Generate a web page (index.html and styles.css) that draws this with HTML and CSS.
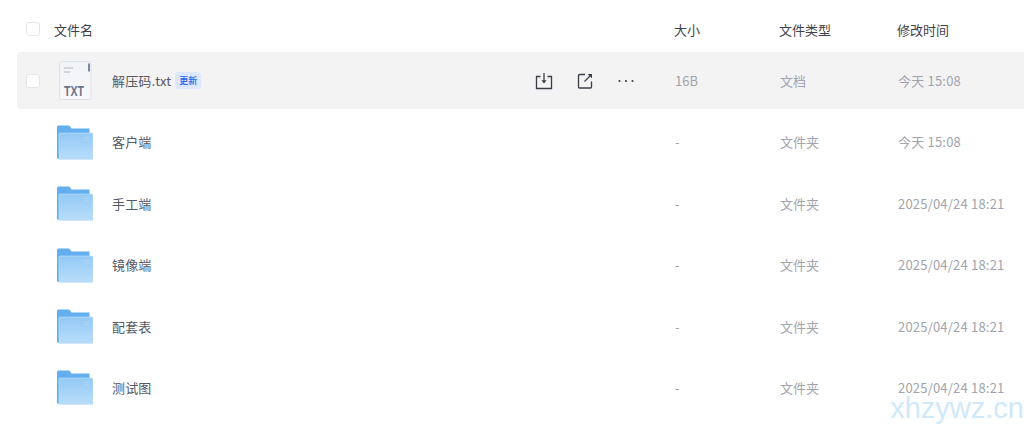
FILE: index.html
```html
<!DOCTYPE html>
<html>
<head>
    <meta charset="UTF-8">
    <title>文件列表</title>
    <link rel="stylesheet" href="styles.css">
</head>
<body>
    <div class="file-list">
        <div class="row head">
            <span class="check"></span>
            <span>文件名</span>
            <span>大小</span>
            <span>文件类型</span>
            <span>修改时间</span>
        </div>

        <div class="row item active">
            <span class="check"></span>
            <div class="name-cell">
                <svg class="file-icon" width="38" height="42" viewBox="0 0 38 42">
                    <defs>
                        <linearGradient id="paper" x1="0" y1="0" x2="0" y2="1">
                            <stop offset="0" stop-color="#f2f3f7"/>
                            <stop offset="1" stop-color="#f8f8fb"/>
                        </linearGradient>
                    </defs>
                    <rect x="4.500" y="1.500" width="31.500" height="38" rx="2" fill="url(#paper)" stroke="#dfe1e8"/>
                    <rect x="33" y="3.500" width="2" height="8" fill="#7d869c"/>
                    <rect x="9" y="7" width="9" height="2" fill="#d2d5dd"/>
                    <rect x="9" y="11" width="6" height="2" fill="#d2d5dd"/>
                    <text class="txt-label" x="9" y="35.500" textLength="20" lengthAdjust="spacingAndGlyphs">TXT</text>
                </svg>
                <span class="file-name">解压码.txt</span>
                <span class="tag">更新</span>
                <div class="actions">
                    <svg width="20" height="20" viewBox="0 0 20 20" fill="none" stroke="#3c3f4a" stroke-width="1.300">
                        <path d="M6.500 5.500H2.500v12h15v-12h-4"/>
                        <path d="M10 2v9"/>
                        <path d="M7.400 9.200h5.200L10 12.600z" fill="#3c3f4a" stroke="none"/>
                    </svg>
                    <svg width="20" height="20" viewBox="0 0 20 20" fill="none" stroke="#3c3f4a" stroke-width="1.300">
                        <path d="M10 3.500H4.500c-.6 0-1 .4-1 1v11.500c0 .6.400 1 1 1h11c.6 0 1-.4 1-1v-5.500"/>
                        <path d="M9.500 10.500l6-6"/>
                        <path d="M12.600 3h4.400v4.400z" fill="#3c3f4a" stroke="none"/>
                    </svg>
                    <svg width="20" height="20" viewBox="0 0 20 20" fill="#3c3f4a">
                        <circle cx="3.500" cy="10" r="1.100"/>
                        <circle cx="10" cy="10" r="1.100"/>
                        <circle cx="16.500" cy="10" r="1.100"/>
                    </svg>
                </div>
            </div>
            <span class="meta">16B</span>
            <span class="meta">文档</span>
            <span class="meta date">今天 15:08</span>
        </div>

        <div class="row item">
            <span></span>
            <div class="name-cell">
                <svg class="file-icon" width="38" height="36" viewBox="0 0 38 36"><use href="#folder"/></svg>
                <span class="file-name">客户端</span>
            </div>
            <span class="meta">-</span>
            <span class="meta">文件夹</span>
            <span class="meta date">今天 15:08</span>
        </div>

        <div class="row item">
            <span></span>
            <div class="name-cell">
                <svg class="file-icon" width="38" height="36" viewBox="0 0 38 36"><use href="#folder"/></svg>
                <span class="file-name">手工端</span>
            </div>
            <span class="meta">-</span>
            <span class="meta">文件夹</span>
            <span class="meta date">2025/04/24 18:21</span>
        </div>

        <div class="row item">
            <span></span>
            <div class="name-cell">
                <svg class="file-icon" width="38" height="36" viewBox="0 0 38 36"><use href="#folder"/></svg>
                <span class="file-name">镜像端</span>
            </div>
            <span class="meta">-</span>
            <span class="meta">文件夹</span>
            <span class="meta date">2025/04/24 18:21</span>
        </div>

        <div class="row item">
            <span></span>
            <div class="name-cell">
                <svg class="file-icon" width="38" height="36" viewBox="0 0 38 36"><use href="#folder"/></svg>
                <span class="file-name">配套表</span>
            </div>
            <span class="meta">-</span>
            <span class="meta">文件夹</span>
            <span class="meta date">2025/04/24 18:21</span>
        </div>

        <div class="row item">
            <span></span>
            <div class="name-cell">
                <svg class="file-icon" width="38" height="36" viewBox="0 0 38 36"><use href="#folder"/></svg>
                <span class="file-name">测试图</span>
            </div>
            <span class="meta">-</span>
            <span class="meta">文件夹</span>
            <span class="meta date">2025/04/24 18:21</span>
        </div>
    </div>

    <div class="watermark">xhzywz.cn</div>

    <!-- 文件夹图标 -->
    <svg class="defs" width="0" height="0">
        <defs>
            <linearGradient id="folder-front" x1="0" y1="0" x2="0" y2="1">
                <stop offset="0" stop-color="#93c9f6"/>
                <stop offset="1" stop-color="#b9ddfa"/>
            </linearGradient>
            <g id="folder">
                <path d="M2 3c0-.8.700-1.500 1.500-1.500h10c.500 0 .900.200 1.200.600L16.500 4.500H34.500V12H4v23H3.500C2.700 35 2 34.300 2 33.500z" fill="#63aeee"/>
                <rect x="4" y="9" width="34" height="26.500" rx="1" fill="url(#folder-front)" stroke="#c5e2fb" stroke-width=".6"/>
                <rect x="29" y="13" width="5" height="1" fill="#add5f6"/>
                <rect x="29" y="15.500" width="5" height="1" fill="#add5f6"/>
            </g>
        </defs>
    </svg>
</body>
</html>
```

FILE: styles.css
```css
html, body {
    height: 424px;
    overflow: hidden;
}

body {
    margin: 0;
    background-color: #fff;
    font-family: 'Noto Sans CJK SC', 'Noto Sans', sans-serif;
    font-size: 13px;
    color: #4a4c58;
    position: relative;
}

.file-list {
    padding: 11px 0 0 17px;
}

.row {
    display: grid;
    grid-template-columns: 37px 621px 105px 118px 1fr;
    align-items: center;
}

.head {
    height: 36px;
    margin-bottom: 5px;
    color: #3f414d;
}

.head span:nth-child(3),
.head span:nth-child(4),
.head span:nth-child(5) {
    margin-left: -1px;
}

.item {
    height: 57px;
    margin-bottom: 4.4px;
    border-radius: 4px 0 0 4px;
}

.active {
    background-color: #f3f3f4;
}

.check {
    width: 14px;
    height: 14px;
    margin-left: 9px;
    box-sizing: border-box;
    border: 1px solid #e4e5e8;
    border-radius: 3px;
    background-color: #fff;
}

.name-cell {
    display: flex;
    align-items: center;
    height: 100%;
}

.file-icon {
    flex: none;
    margin-left: 1px;
    margin-right: 19px;
}

.file-name {
    color: #565864;
    letter-spacing: .15px;
}

.tag {
    margin-left: 4px;
    padding: 0 4px;
    height: 17px;
    line-height: 17px;
    border-radius: 4px;
    background-color: #dde7fd;
    color: #2b63f0;
    font-size: 9px;
    font-weight: 500;
}

.actions {
    margin-left: auto;
    margin-right: 39px;
    display: flex;
    gap: 21px;
}

.meta {
    color: #a2a3ad;
}

.date {
    letter-spacing: .2px;
}

.txt-label {
    font-family: 'Liberation Sans', sans-serif;
    font-size: 14px;
    font-weight: 700;
    fill: #6c7488;
}

.defs {
    position: absolute;
}

.watermark {
    position: absolute;
    right: 0;
    top: 398px;
    font-family: 'Liberation Sans', sans-serif;
    font-size: 29px;
    line-height: 20px;
    color: #cfe9fb;
}
```
